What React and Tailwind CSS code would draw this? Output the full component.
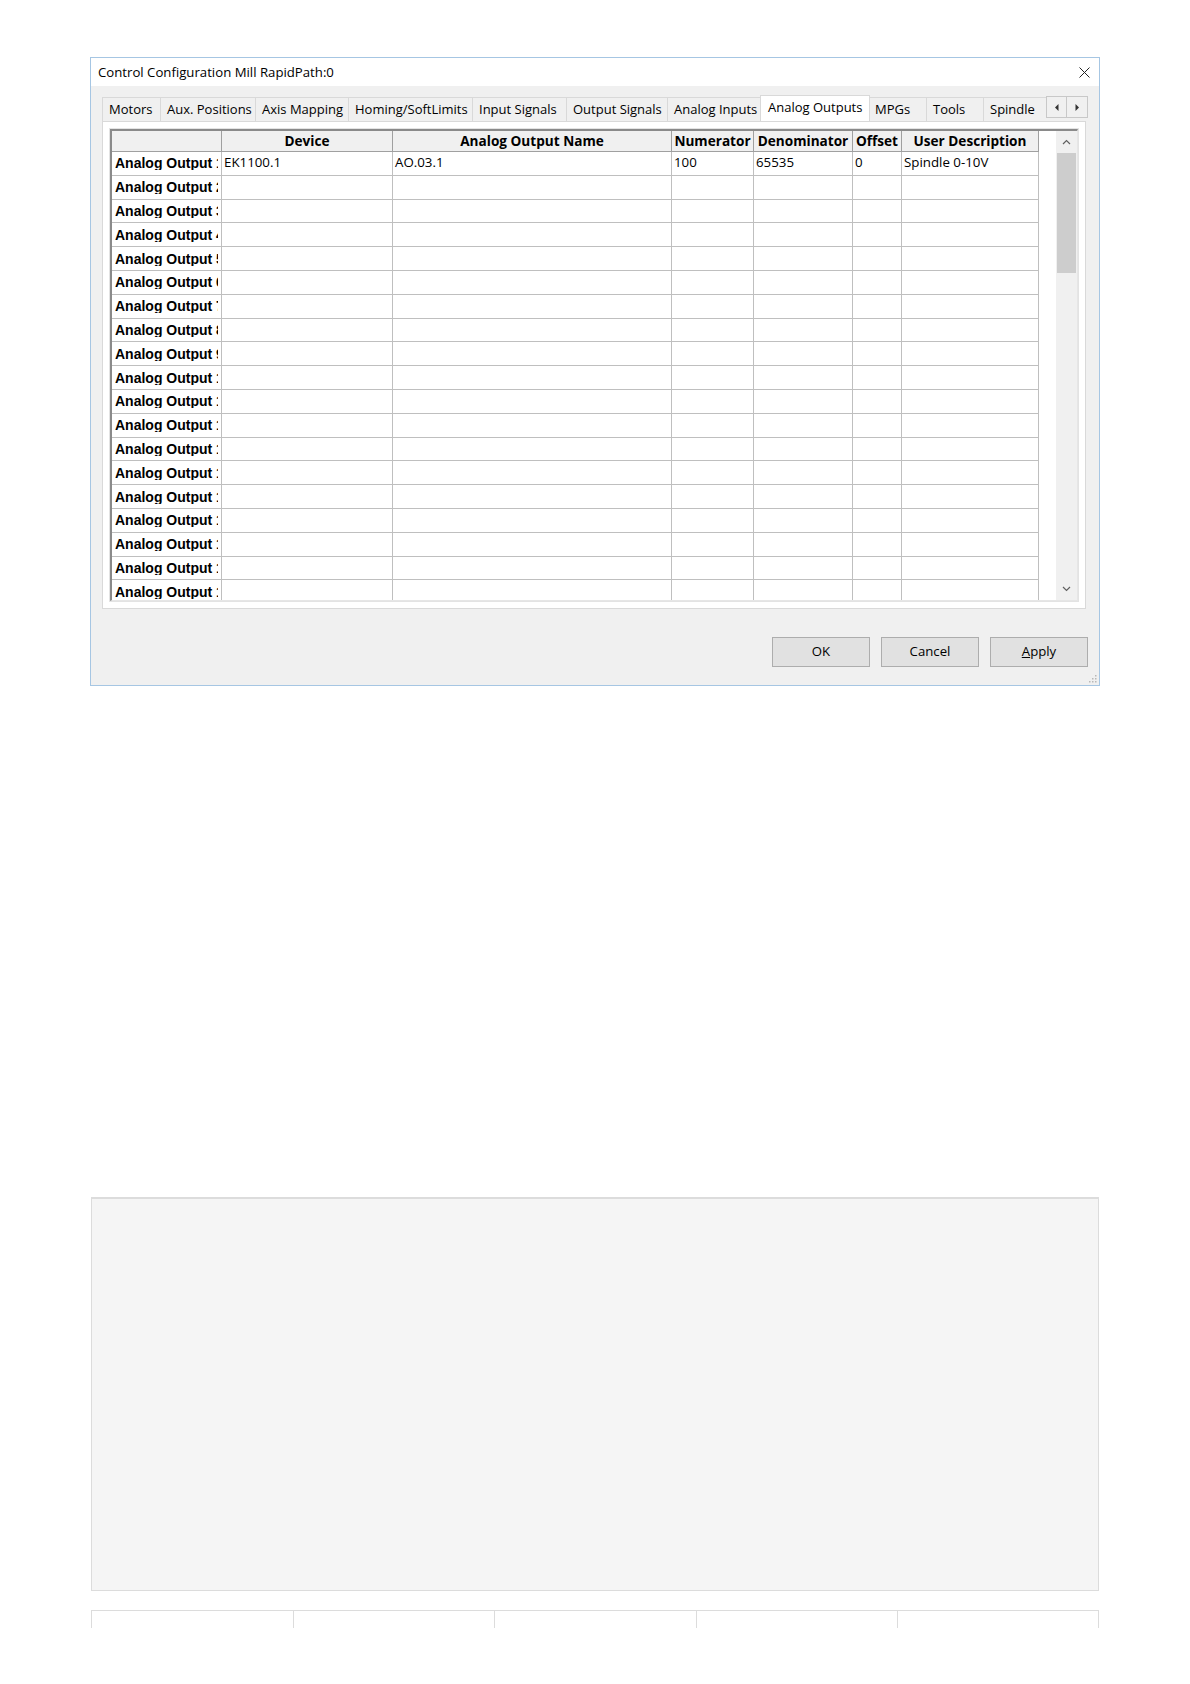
import React from "react";

const ui = { fontFamily: '"Open Sans", "Noto Sans", sans-serif' };
const rowFont = { fontFamily: '"Liberation Sans", Arial, sans-serif' };

const tabs = [
  { label: "Motors", w: "w-[58px]" },
  { label: "Aux. Positions", w: "w-[95px]" },
  { label: "Axis Mapping", w: "w-[93px]" },
  { label: "Homing/SoftLimits", w: "w-[124px]" },
  { label: "Input Signals", w: "w-[94px]" },
  { label: "Output Signals", w: "w-[101px]" },
  { label: "Analog Inputs", w: "w-[95px]" },
  { label: "Analog Outputs", w: "w-[110px]", active: true },
  { label: "MPGs", w: "w-[58px]" },
  { label: "Tools", w: "w-[57px]" },
  { label: "Spindle", w: "w-[66px]" },
];

const columns = [
  { title: "", w: "w-[110px]" },
  { title: "Device", w: "w-[171px]" },
  { title: "Analog Output Name", w: "w-[279px]" },
  { title: "Numerator", w: "w-[82px]" },
  { title: "Denominator", w: "w-[99px]" },
  { title: "Offset", w: "w-[49px]" },
  { title: "User Description", w: "w-[137px]" },
];

const firstRow = ["EK1100.1", "AO.03.1", "100", "65535", "0", "Spindle 0-10V"];

function Chevron({ up }) {
  return (
    <svg width="9" height="6" viewBox="0 0 9 6" className="block">
      <path
        d={up ? "M1 5 L4.5 1.5 L8 5" : "M1 1 L4.5 4.5 L8 1"}
        fill="none"
        stroke="#606060"
        strokeWidth="1.2"
      />
    </svg>
  );
}

function Tab({ label, w, active }) {
  if (active) {
    return (
      <div
        className={`${w} h-[27px] -mb-px -mx-[2px] z-10 shrink-0 flex items-center pl-[7px] pb-[2px] bg-white border border-b-0 border-[#d9d9d9] text-[13px] text-black whitespace-nowrap`}
      >
        {label}
      </div>
    );
  }
  return (
    <div
      className={`${w} h-[24px] shrink-0 flex items-center pl-[6px] border-t border-l border-[#d9d9d9] bg-[#f0f0f0] text-[13px] text-black whitespace-nowrap`}
    >
      {label}
    </div>
  );
}

function DataRow({ index, values }) {
  return (
    <div className="flex h-[23.8px] shrink-0">
      <div
        className="w-[110px] shrink-0 border-r border-b border-[#bfbfbf] bg-white flex items-center pl-[3px] pr-[3px]"
        style={rowFont}
      >
        <span className="block overflow-hidden whitespace-nowrap font-bold text-[14px] text-black leading-none">
          Analog Output {index + 1}
        </span>
      </div>
      {columns.slice(1).map((c, i) => (
        <div
          key={c.title}
          className={`${c.w} shrink-0 border-r border-b border-[#bfbfbf] bg-white flex items-center pl-[2px] text-[13.3px] text-black whitespace-nowrap overflow-hidden`}
        >
          {values ? values[i] : ""}
        </div>
      ))}
    </div>
  );
}

export default function App() {
  const rows = Array.from({ length: 19 }, (_, i) => i);

  return (
    <div className="w-[1190px] h-[1684px] bg-white overflow-hidden" style={ui}>
      {/* Dialog */}
      <div className="ml-[90px] mt-[57px] w-[1010px] h-[629px] border border-[#a6c6e3] flex flex-col">
        <div className="h-[28px] bg-white flex items-center justify-between pl-[7px] pr-[9px] pt-px">
          <span className="text-[13.2px] text-black">Control Configuration Mill RapidPath:0</span>
          <svg width="11" height="11" viewBox="0 0 11 11" className="block">
            <path d="M0.5 0.5 L10.5 10.5 M10.5 0.5 L0.5 10.5" stroke="#222" strokeWidth="1" />
          </svg>
        </div>

        <div className="flex-1 bg-[#f0f0f0] pt-[11px] pl-[11px] relative">
          {/* Tab strip */}
          <div className="w-[986px] flex items-end h-[24px]">
            <div className="flex-1 flex items-end overflow-hidden h-[27px] pl-[2px] -ml-[2px]">
              {tabs.map((t) => (
                <Tab key={t.label} {...t} />
              ))}
            </div>
            <div className="flex h-[22px] self-start -mt-px">
              <div className="w-[21px] h-full border border-[#c8c8c8] bg-[#f0f0f0] flex items-center justify-center">
                <svg width="4" height="7" viewBox="0 0 4 7"><path d="M3.5 0 L0 3.5 L3.5 7 Z" fill="#333" /></svg>
              </div>
              <div className="w-[21px] h-full border border-l-0 border-[#c8c8c8] bg-[#f0f0f0] flex items-center justify-center">
                <svg width="4" height="7" viewBox="0 0 4 7"><path d="M0.5 0 L4 3.5 L0.5 7 Z" fill="#333" /></svg>
              </div>
            </div>
          </div>

          {/* Tab page */}
          <div className="w-[984px] h-[488px] bg-white border border-[#d9d9d9] p-[6px]">
            <div className="w-full h-full border border-[#e3e3e3]">
              <div className="w-[968px] h-[472px] border-t-2 border-l-2 border-[#8a8a8a] border-r border-b border-r-[#e6e6e6] border-b-[#e6e6e6] flex overflow-hidden">
                <div className="w-[945px] flex flex-col overflow-hidden">
                  <div className="flex h-[21px] shrink-0">
                    {columns.map((c, i) => (
                      <div
                        key={c.title || i}
                        className={`${c.w} shrink-0 h-full border-r border-b border-[#a0a0a0] bg-[#f0f0f0] flex items-center justify-center font-bold text-[13.6px] text-black whitespace-nowrap`}
                      >
                        {c.title}
                      </div>
                    ))}
                  </div>
                  {rows.map((i) => (
                    <DataRow key={i} index={i} values={i === 0 ? firstRow : null} />
                  ))}
                </div>

                {/* Scrollbar */}
                <div className="w-[21px] shrink-0 bg-[#f0f0f0] flex flex-col">
                  <div className="h-[22px] flex items-center justify-center">
                    <Chevron up />
                  </div>
                  <div className="flex-1">
                    <div className="h-[120px] bg-[#cdcdcd] mx-[1px]" />
                  </div>
                  <div className="h-[22px] flex items-center justify-center">
                    <Chevron />
                  </div>
                </div>
              </div>
            </div>
          </div>

          {/* Buttons */}
          <div className="w-[986px] flex justify-end gap-[11px] mt-[28px]">
            {["OK", "Cancel"].map((b) => (
              <div
                key={b}
                className="w-[98px] h-[30px] bg-[#e1e1e1] border border-[#adadad] flex items-center justify-center text-[13.2px] text-black"
              >
                {b}
              </div>
            ))}
            <div className="w-[98px] h-[30px] bg-[#e1e1e1] border border-[#adadad] flex items-center justify-center text-[13.2px] text-black">
              <span>
                <span className="underline">A</span>pply
              </span>
            </div>
          </div>

          {/* Resize grip */}
          <svg width="8" height="8" viewBox="0 0 8 8" className="absolute right-[2px] bottom-[2px]">
            <rect x="6" y="0" width="1.5" height="1.5" fill="#b8b8b8" />
            <rect x="3" y="3" width="1.5" height="1.5" fill="#b8b8b8" />
            <rect x="6" y="3" width="1.5" height="1.5" fill="#b8b8b8" />
            <rect x="0" y="6" width="1.5" height="1.5" fill="#b8b8b8" />
            <rect x="3" y="6" width="1.5" height="1.5" fill="#b8b8b8" />
            <rect x="6" y="6" width="1.5" height="1.5" fill="#b8b8b8" />
          </svg>
        </div>
      </div>

      {/* Placeholder panel */}
      <div className="ml-[91px] mt-[511px] w-[1008px] h-[394px] bg-[#f5f5f5] border border-[#dcdcdc] border-t-2" />

      {/* Cut-off table row */}
      <div className="ml-[91px] mt-[19px] w-[1008px] h-[18px] grid grid-cols-5 border-t border-[#dcdcdc]">
        {[0, 1, 2, 3, 4].map((i) => (
          <div key={i} className={`border-l border-[#dcdcdc] ${i === 4 ? "border-r" : ""}`} />
        ))}
      </div>
    </div>
  );
}
